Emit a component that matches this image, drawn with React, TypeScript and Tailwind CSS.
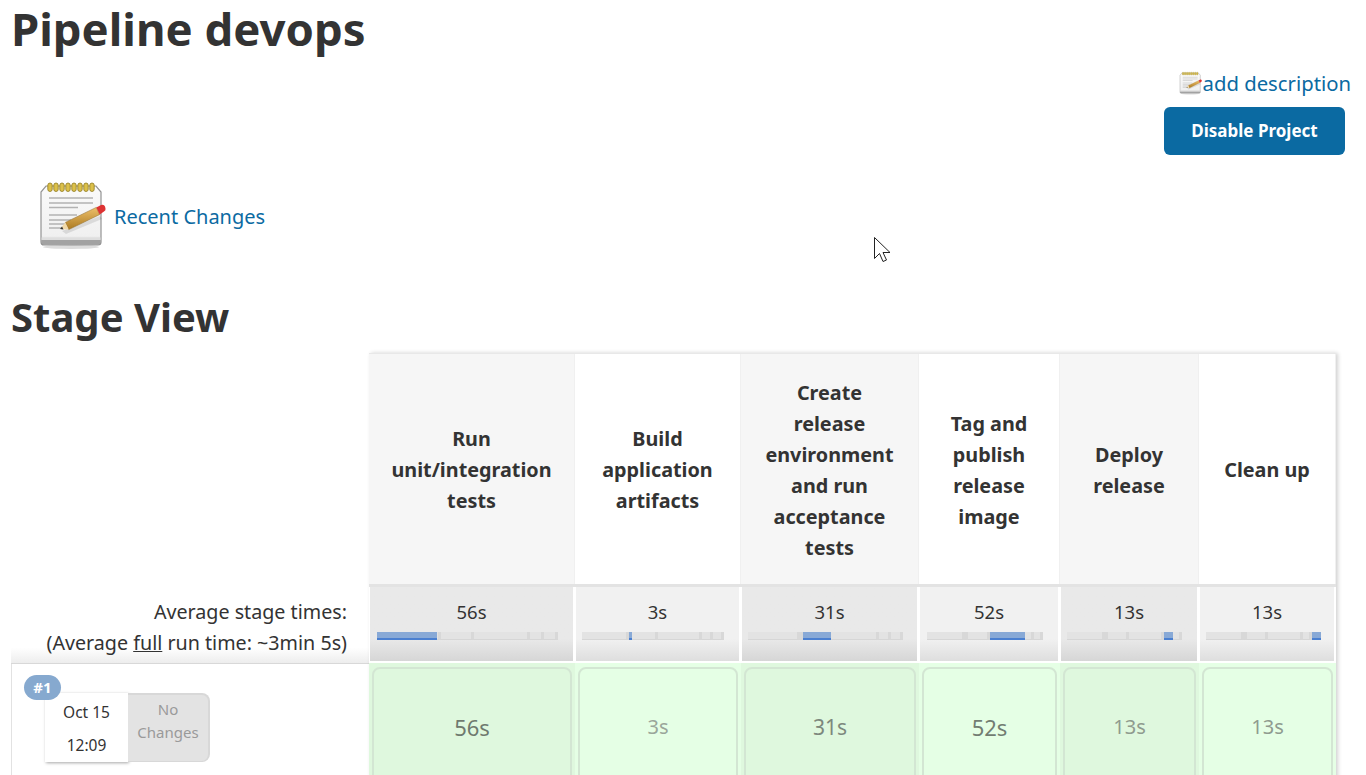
const stages = [
  { name: ["Run", "unit/integration", "tests"], time: "56s", sec: 56, width: "w-[206px]", bar: "w-[181px] ml-[7px]", text: "text-[22px] text-[#6f7a6f]" },
  { name: ["Build", "application", "artifacts"], time: "3s", sec: 3, width: "w-[166px]", bar: "w-[142px] ml-[6px]", text: "text-[20px] text-[#9aa69a]" },
  { name: ["Create", "release", "environment", "and run", "acceptance", "tests"], time: "31s", sec: 31, width: "w-[178px]", bar: "w-[155px] ml-[6px]", text: "text-[21px] text-[#7d887d]" },
  { name: ["Tag and", "publish", "release", "image"], time: "52s", sec: 52, width: "w-[141px]", bar: "w-[116px] ml-[7px]", text: "text-[22px] text-[#727d72]" },
  { name: ["Deploy", "release"], time: "13s", sec: 13, width: "w-[139px]", bar: "w-[115px] ml-[6px]", text: "text-[20px] text-[#8f9b8f]" },
  { name: ["Clean up"], time: "13s", sec: 13, width: "w-[137px]", bar: "w-[115px] ml-[6px]", text: "text-[20px] text-[#8f9b8f]" },
];

const total = stages.reduce((sum, s) => sum + s.sec, 0);

function NotepadIcon({ className }: { className: string }) {
  return (
    <svg viewBox="0 0 68 70" className={className}>
      <defs>
        <linearGradient id="pad" x1="0" y1="0" x2="0" y2="1">
          <stop offset="0" stopColor="#fafafa" />
          <stop offset="0.85" stopColor="#f0f0f0" />
          <stop offset="1" stopColor="#b0b0b0" />
        </linearGradient>
        <linearGradient id="pencil" x1="0" y1="0" x2="0" y2="1">
          <stop offset="0" stopColor="#eec06a" />
          <stop offset="1" stopColor="#ab7a22" />
        </linearGradient>
      </defs>
      <ellipse cx="33" cy="67" rx="28" ry="2" fill="#dcdcdc" />
      <path d="M8 6h50l5 6v50q0 3-3 3H6q-3 0-3-3V12z" fill="url(#pad)" stroke="#939393" strokeWidth="1.2" />
      <path d="M3.5 60h59v2q0 2.5-2.5 2.5H6q-2.5 0-2.5-2.5z" fill="#a2a2a2" />
      <path d="M3.5 57.5h59V60h-59z" fill="#dedede" />
      {[12, 18, 24, 30, 36, 42, 48, 54].map((x) => (
        <rect key={x} x={x - 2.2} y="3" width="4.4" height="8.5" rx="2.2" fill="#dcc04a" stroke="#8f7a1e" strokeWidth="0.8" />
      ))}
      <g stroke="#b2b2b2" strokeWidth="1.3">
        <path d="M11 18h44M11 23h44M11 27.500h29M11 35h28M11 40h22M11 44h16M11 48h14" />
      </g>
      <path d="M24 51l38-15 2 3-36 15z" fill="#000" opacity="0.1" />
      <path d="M27.300 42.400L58.300 27.400L61.700 34.600L30.700 49.600z" fill="url(#pencil)" stroke="#8a6420" strokeWidth="0.5" />
      <path d="M22 49L27.300 42.400L30.700 49.600z" fill="#f1d9a8" />
      <path d="M22 49l2-2.500 1.500 3z" fill="#333" />
      <path d="M58.300 27.400L63 25q3-1 4 1.500l.5 2q.5 2-1.500 3L61.700 34.600z" fill="#dd3333" />
    </svg>
  );
}

function StageBar({ index, bar }: { index: number; bar: string }) {
  return (
    <div className={`flex h-2 ${bar} bg-[#e2e2e2]`}>
      {stages.map((s, i) => (
        <div
          key={i}
          style={{ width: `${(s.sec / total) * 100}%` }}
          className={
            i === index
              ? "bg-[#88a9d6] border-b-2 border-[#4a7fd0]"
              : "bg-[#e3e3e3] border-b border-[#d6d6d6] border-r-[3px] border-r-[#d8d8d8]"
          }
        />
      ))}
    </div>
  );
}

export default function App() {
  return (
    <div className="relative h-[775px] overflow-hidden bg-white font-['Noto_Sans',sans-serif] text-[#333]">
      <h1 className="pl-[11px] text-[45.500px] leading-[56px] font-bold">Pipeline devops</h1>

      <div className="flex flex-col items-end">
        <a className="mt-[13px] mr-[15px] flex items-center text-[20.300px] leading-[28px] text-[#0b6aa2]">
          <NotepadIcon className="mr-[1px] h-[24px] w-[23px] blur-[0.3px]" />
          add description
        </a>
        <div className="mt-[10px] mr-[21px] flex h-12 w-[181px] items-center justify-center rounded-md bg-[#0b6aa2] text-[17px] font-bold text-white">
          Disable Project
        </div>
      </div>

      <div className="ml-[38px] mt-[24px] flex h-[72px] items-center gap-[8px]">
        <NotepadIcon className="h-[70px] w-[68px] blur-[0.4px]" />
        <a className="mt-[3px] text-[20px] text-[#0b6aa2]">Recent Changes</a>
      </div>

      <h2 className="mt-[41px] pl-[11px] text-[40px] leading-[50px] font-bold">Stage View</h2>

      <div className="mt-[11px] flex pl-[11px]">
        <div className="w-[358px] shrink-0">
          <div className="h-[233px]" />
          <div className="flex h-[78px] flex-col items-end justify-center border-b border-[#d8d8d8] bg-gradient-to-b from-white from-80% to-[#ededed] pt-[5px] pr-[22px] text-[19.700px] leading-[31px]">
            <div>Average stage times:</div>
            <div>
              (Average <u>full</u> run time: ~3min 5s)
            </div>
          </div>
          <div className="relative h-[130px] border-l border-[#e2e2e2] pl-[33px] pt-[29px]">
            <div className="absolute left-[12px] top-[11px] z-10 flex h-[25px] w-[37px] items-center justify-center rounded-full bg-[#86a9cf] text-[15px] font-bold text-white">
              #1
            </div>
            <div className="flex h-[69px] w-[165px]">
              <div className="flex w-[83px] flex-col items-center justify-center gap-[11px] bg-white pt-[1px] text-[15.500px] leading-[22px] shadow-[1px_1px_3px_rgba(0,0,0,0.35)]">
                <div>Oct 15</div>
                <div>12:09</div>
              </div>
              <div className="flex w-[82px] flex-col items-center rounded-r-lg border-t-2 border-r-2 border-b border-[#d8d8d8] bg-[#e3e3e3] pt-[3px] text-[15px] leading-[23px] text-[#9a9a9a]">
                <div>No</div>
                <div>Changes</div>
              </div>
            </div>
          </div>
        </div>

        <div className="w-[967px] shrink-0 border-t border-[#e8e8e8] shadow-[2px_0_4px_rgba(0,0,0,0.18)]">
          <div className="flex h-[233px] border-b-[3px] border-[#e3e3e3]">
            {stages.map((s, i) => (
              <div
                key={i}
                className={`${s.width} flex shrink-0 flex-col items-center justify-center border-r border-[#f0f0f0] pt-[1px] text-[19.800px] leading-[31px] font-bold ${i % 2 === 0 ? "bg-[#f6f6f6]" : "bg-white"}`}
              >
                {s.name.map((line) => (
                  <div key={line}>{line}</div>
                ))}
              </div>
            ))}
          </div>
          <div className="flex h-[76px] border-b-2 border-white">
            {stages.map((s, i) => (
              <div
                key={i}
                className={`${s.width} shrink-0 border-r-2 border-l border-white bg-gradient-to-b pt-[12px] text-center text-[18.500px] leading-[26px] from-70% ${i % 2 === 0 ? "from-[#e9e9e9] to-[#d6d6d6]" : "from-[#f1f1f1] to-[#dedede]"}`}
              >
                {s.time}
                <div className="mt-[7px]">
                  <StageBar index={i} bar={s.bar} />
                </div>
              </div>
            ))}
          </div>
          <div className="flex h-[130px]">
            {stages.map((s, i) => (
              <div key={i} className={`${s.width} shrink-0 pt-[4px] pr-[3px] pl-[3px] ${i % 2 === 0 ? "bg-[#dff8de]" : "bg-[#e5ffe5]"}`}>
                <div className={`flex h-[180px] items-start justify-center rounded-lg border-2 border-[#d3e6d3] pt-[43px] leading-[30px] ${s.text}`}>
                  {s.time}
                </div>
              </div>
            ))}
          </div>
        </div>
      </div>

      <svg viewBox="0 0 20 28" className="absolute left-[873px] top-[236px] h-[28px] w-[20px]">
        <path d="M1.500 1.500v21l5-5 3.500 8 3.500-1.500-3.500-7.500h7z" fill="#fff" stroke="#222" strokeWidth="1" />
      </svg>
    </div>
  );
}
